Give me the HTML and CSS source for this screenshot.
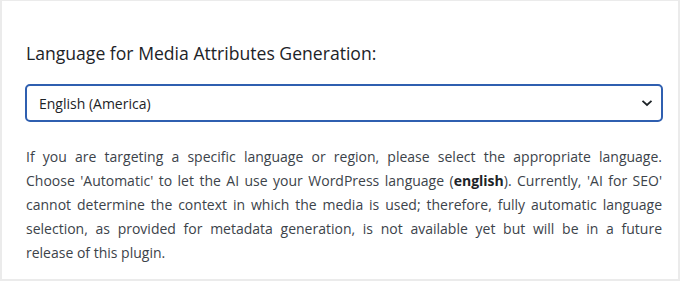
FILE: index.html
```html
<!DOCTYPE html>
<html lang="en">
<head>
  <meta charset="UTF-8" />
  <title>Media Attributes Language</title>
  <link rel="stylesheet" href="styles.css">
</head>
<body>
  <div class="panel">
    <label class="field-label" for="mediaLang">Language for Media Attributes Generation:</label>
    <div class="select-wrap">
      <select id="mediaLang" class="lang-select">
        <option>English (America)</option>
        <option>Automatic</option>
      </select>
      <svg class="chevron" width="12" height="8" viewBox="0 0 12 8" aria-hidden="true">
        <path d="M1.5 1.8 L6 6 L10.5 1.8" fill="none" stroke="#1d2327" stroke-width="1.8" />
      </svg>
    </div>
    <p class="help">
      <span class="line">If you are targeting a specific language or region, please select the appropriate language.</span>
      <span class="line">Choose 'Automatic' to let the AI use your WordPress language (<strong>english</strong>). Currently, 'AI for SEO'</span>
      <span class="line">cannot determine the context in which the media is used; therefore, fully automatic language</span>
      <span class="line">selection, as provided for metadata generation, is not available yet but will be in a future</span>
      <span class="line last">release of this plugin.</span>
    </p>
  </div>
</body>
</html>
```

FILE: styles.css
```css
* {
  box-sizing: border-box;
}

body {
  margin: 0;
  background: #ebebeb;
  font-family: 'Open Sans', 'Noto Sans', sans-serif;
}

.panel {
  margin: 1px 2px 2px 2px;
  height: 278px;
  background: #fff;
  padding: 40px 16px 0 24px;
}

.field-label {
  display: block;
  font-size: 17.6px;
  line-height: 24px;
  color: #1d2327;
  margin-bottom: 19px;
}

.select-wrap {
  position: relative;
}

.lang-select {
  display: block;
  width: calc(100% + 2px);
  height: 38px;
  margin: 0 0 0 -1px;
  padding: 0 30px 0 12px;
  border: 2px solid #2f5fb0;
  border-radius: 5px;
  background: #fff;
  font-family: inherit;
  font-size: 14px;
  color: #1d2327;
  appearance: none;
  -webkit-appearance: none;
}

.chevron {
  position: absolute;
  right: 9px;
  top: 15px;
  pointer-events: none;
}

.help {
  margin: 23px 0 0 0;
  font-size: 14px;
  line-height: 24px;
  color: #3c434a;
}

.help .line {
  display: block;
  text-align: justify;
  text-align-last: justify;
}

.help .line.last {
  text-align-last: left;
}

.help strong {
  color: #1d2327;
}
```
